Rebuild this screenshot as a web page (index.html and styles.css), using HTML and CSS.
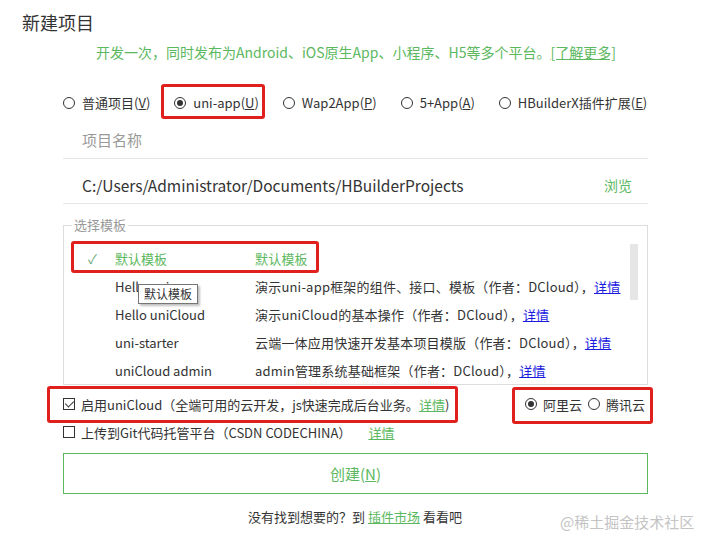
FILE: index.html
```html
<!DOCTYPE html>
<html lang="zh-CN">
<head>
<meta charset="utf-8">
<title>新建项目</title>
<link rel="stylesheet" href="styles.css">
</head>
<body>
<div class="dialog">
  <h1 class="title">新建项目</h1>
  <p class="intro">开发一次，同时发布为Android、iOS原生App、小程序、H5等多个平台。<a class="glink">[了解更多]</a></p>

  <div class="types">
    <label class="opt"><span class="radio"></span>普通项目(<u>V</u>)</label>
    <label class="opt"><span class="radio on"></span>uni-app(<u>U</u>)</label>
    <label class="opt"><span class="radio"></span>Wap2App(<u>P</u>)</label>
    <label class="opt"><span class="radio"></span>5+App(<u>A</u>)</label>
    <label class="opt"><span class="radio"></span>HBuilderX插件扩展(<u>E</u>)</label>
  </div>

  <div class="main">
    <div class="field name">项目名称</div>
    <div class="field path"><span>C:/Users/Administrator/Documents/HBuilderProjects</span><a class="browse">浏览</a></div>

    <fieldset class="tpl">
      <legend>选择模板</legend>
      <div class="tpl-body">
        <div class="list">
          <div class="row sel"><span class="chk">✓</span><span class="nm">默认模板</span><span class="ds">默认模板</span></div>
          <div class="row"><span class="chk"></span><span class="nm">Hello uni-app</span><span class="ds">演示uni-app框架的组件、接口、模板（作者：DCloud），<a class="blink">详情</a></span></div>
          <div class="row"><span class="chk"></span><span class="nm">Hello uniCloud</span><span class="ds">演示uniCloud的基本操作（作者：DCloud），<a class="blink">详情</a></span></div>
          <div class="row"><span class="chk"></span><span class="nm">uni-starter</span><span class="ds">云端一体应用快速开发基本项目模版（作者：DCloud），<a class="blink">详情</a></span></div>
          <div class="row"><span class="chk"></span><span class="nm">uniCloud admin</span><span class="ds">admin管理系统基础框架（作者：DCloud），<a class="blink">详情</a></span></div>
        </div>
        <div class="track"><div class="thumb"></div></div>
      </div>
      <div class="tooltip">默认模板</div>
    </fieldset>

    <div class="line cloud">
      <span class="box on"></span>
      <span class="txt">启用uniCloud（全端可用的云开发，js快速完成后台业务。<a class="glink">详情</a>)</span>
      <span class="vendors"><span class="radio on"></span>阿里云<span class="radio r2"></span>腾讯云</span>
    </div>
    <div class="line git">
      <span class="box"></span>
      <span class="txt">上传到Git代码托管平台（CSDN CODECHINA）<a class="glink gap">详情</a></span>
    </div>

    <button class="create">创建(<u>N</u>)</button>
  </div>

  <p class="more">没有找到想要的？到 <a class="glink">插件市场</a> 看看吧</p>

  <div class="mark m1"></div>
  <div class="mark m2"></div>
  <div class="mark m3"></div>
  <div class="mark m4"></div>
  <div class="watermark">@稀土掘金技术社区</div>
</div>
</body>
</html>
```

FILE: styles.css
```css
* { box-sizing: border-box; }
html, body { margin: 0; padding: 0; background: #fff; }
body {
  width: 710px;
  height: 548px;
  overflow: hidden;
  font-family: "Noto Sans CJK SC", "Noto Sans", sans-serif;
  font-size: 13px;
  color: #333;
}
.dialog {
  position: relative;
  width: 710px;
  height: 548px;
  padding-top: 10px;
}
.title {
  margin: 0 0 0 22px;
  font-size: 18px;
  line-height: 24px;
  font-weight: normal;
  color: #333;
}
.intro {
  margin: 8px 0 0 96px;
  line-height: 20px;
  font-size: 14px;
  color: #5cb860;
}
.glink { color: #5cb860; text-decoration: underline; }
.blink { color: #1a1adf; text-decoration: underline; }

.types {
  display: flex;
  align-items: center;
  margin: 31px 0 0 63px;
  height: 20px;
  gap: 24px;
}
.opt { display: flex; align-items: center; line-height: 20px; white-space: nowrap; }
.radio {
  display: inline-block;
  position: relative;
  width: 12px;
  height: 12px;
  border: 1px solid #333;
  border-radius: 50%;
  margin-right: 7px;
  flex: none;
}
.radio.on::after {
  content: "";
  position: absolute;
  left: 2px; top: 2px;
  width: 6px; height: 6px;
  border-radius: 50%;
  background: #333;
}

.main { margin: 8px 0 0 63px; width: 585px; }
.field {
  display: flex;
  align-items: center;
  border-bottom: 1px solid #e6e6e6;
  padding-left: 19px;
}
.name { height: 38px; color: #999; font-size: 15px; }
.path {
  height: 45px;
  padding-top: 8px;
  padding-right: 16px;
  justify-content: space-between;
  font-size: 15.5px;
}
.browse { color: #5cb860; font-size: 14px; }

.tpl {
  position: relative;
  margin: 13px 0 0;
  padding: 0;
  border: 1px solid #ddd;
  min-width: 0;
  height: 168px;
}
.tpl legend {
  margin-left: 8px;
  padding: 0 2px;
  line-height: 16px;
  color: #999;
}
.tpl-body { display: flex; }
.list { flex: 1; padding-top: 11px; height: 151px; overflow: hidden; }
.row {
  display: flex;
  align-items: center;
  height: 28px;
  padding-left: 24px;
  white-space: nowrap;
}
.chk { width: 27px; color: #6aa878; font-size: 13px; }
.nm { width: 140px; }
.ds { letter-spacing: 0.2px; }
.row.sel { color: #5cb860; }
.track { width: 8px; margin-right: 9px; padding-top: 11px; }
.thumb { height: 56px; background: #e6e6e6; }

.tooltip {
  position: absolute;
  left: 74px;
  top: 51px;
  padding: 0 5px;
  height: 20px;
  line-height: 18px;
  font-size: 12px;
  background: #fff;
  border: 1px solid #767676;
  box-shadow: 2px 2px 2px rgba(0,0,0,0.25);
  color: #333;
}

.line { display: flex; align-items: center; height: 28px; white-space: nowrap; }
.cloud { margin-top: 5px; }
.box {
  position: relative;
  width: 12px; height: 12px;
  border: 1px solid #333;
  margin-right: 6px;
  flex: none;
}
.box.on::after {
  content: "";
  position: absolute;
  left: 3px; top: 0px;
  width: 4px; height: 7px;
  border: solid #333;
  border-width: 0 1.5px 1.5px 0;
  transform: rotate(45deg);
}
.vendors { margin-left: auto; margin-right: 3px; display: flex; align-items: center; }
.vendors .radio { margin-right: 6px; }
.vendors .r2 { margin-left: 6px; }
.gap { margin-left: 17px; }

.create {
  display: block;
  width: 585px;
  height: 41px;
  margin-top: 7px;
  background: #fff;
  border: 1px solid #5cb860;
  color: #5cb860;
  font-family: inherit;
  font-size: 15px;
}

.more { margin: 13px 0 0; text-align: center; line-height: 20px; }

.mark {
  position: absolute;
  border: 3px solid #e0201c;
  border-radius: 3px;
}
.m1 { left: 161px; top: 84px; width: 104px; height: 35px; }
.m2 { left: 71px; top: 241px; width: 248px; height: 32px; }
.m3 { left: 47px; top: 386px; width: 411px; height: 37px; }
.m4 { left: 512px; top: 387px; width: 141px; height: 37px; }

.watermark {
  position: absolute;
  left: 560px;
  top: 511px;
  font-size: 15px;
  line-height: 22px;
  color: #c4c4c4;
}
```
